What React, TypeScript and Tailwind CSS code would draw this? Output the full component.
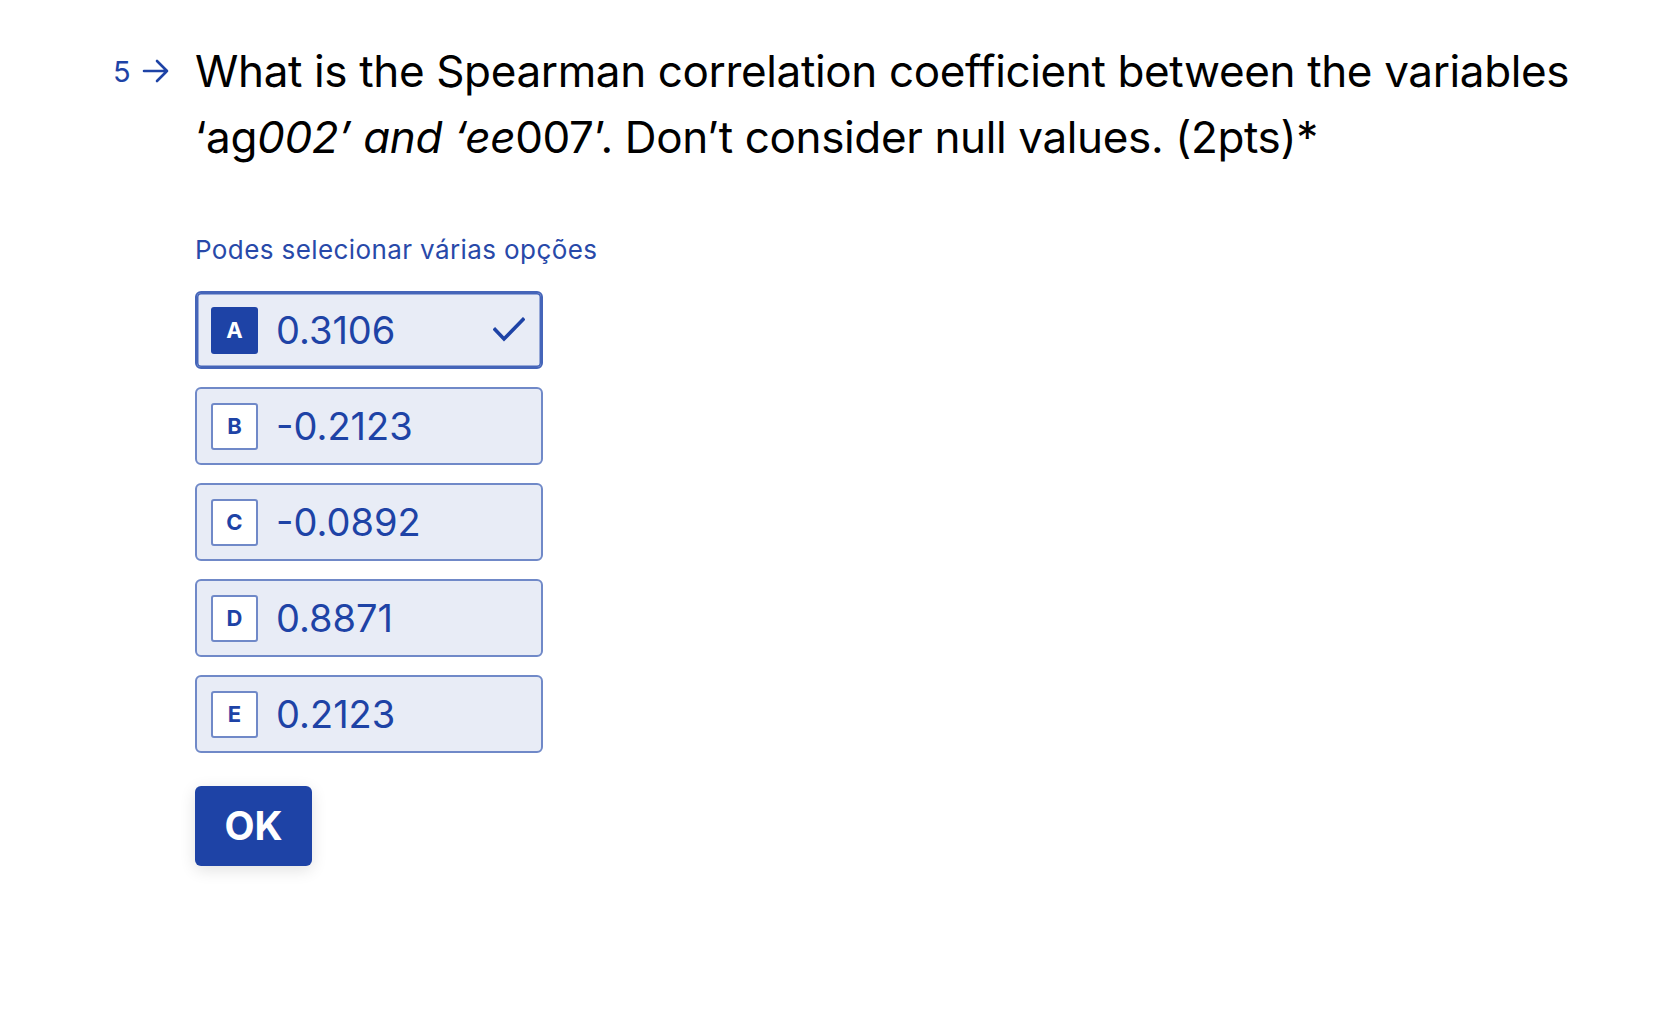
import React, { useState } from "react";

const options = [
  { key: "A", value: "0.3106" },
  { key: "B", value: "-0.2123" },
  { key: "C", value: "-0.0892" },
  { key: "D", value: "0.8871" },
  { key: "E", value: "0.2123" },
];

function Check() {
  return (
    <svg width="32" height="26" viewBox="0 0 32 26" fill="none">
      <path
        d="M2 12.5 L11 22 L30 2.5"
        stroke="#1e43a6"
        strokeWidth="3.6"
        strokeLinecap="square"
        strokeLinejoin="miter"
      />
    </svg>
  );
}

function Arrow() {
  return (
    <svg width="28" height="24" viewBox="0 0 28 24" fill="none">
      <path
        d="M2 12 H25 M15 2 L25 12 L15 22"
        stroke="#1e43a6"
        strokeWidth="2.6"
        strokeLinecap="round"
        strokeLinejoin="round"
      />
    </svg>
  );
}

function Option({
  letter,
  value,
  selected,
  onClick,
}: {
  letter: string;
  value: string;
  selected: boolean;
  onClick: () => void;
}) {
  return (
    <button
      onClick={onClick}
      className={
        selected
          ? "flex h-[78px] w-[348px] cursor-pointer items-center rounded-[6px] border-2 border-[#4565b9] bg-[#e8ecf6] pl-[14px] pr-[16px] text-left shadow-[inset_0_0_0_1.5px_#4565b9]"
          : "flex h-[78px] w-[348px] cursor-pointer items-center rounded-[6px] border-2 border-[#7089c8] bg-[#e8ecf6] pl-[14px] pr-[16px] text-left"
      }
    >
      <span
        className={
          selected
            ? "flex h-[47px] w-[47px] shrink-0 items-center justify-center rounded-[3px] bg-[#1e43a6] text-[22px] font-bold text-white"
            : "flex h-[47px] w-[47px] shrink-0 items-center justify-center rounded-[3px] border-2 border-[#7089c8] bg-white text-[22px] font-bold text-[#1e43a6]"
        }
      >
        {letter}
      </span>
      <span className="ml-[18px] flex-1 text-[38px] leading-none text-[#1e43a6]">
        {value}
      </span>
      {selected && <Check />}
    </button>
  );
}

export default function App() {
  const [selected, setSelected] = useState<string[]>(["A"]);

  const toggle = (k: string) =>
    setSelected((s) => (s.includes(k) ? s.filter((x) => x !== k) : [...s, k]));

  return (
    <div className="min-h-screen bg-white font-['Inter','Liberation_Sans',sans-serif] text-black">
      <div className="flex pl-[113px] pt-[38px]">
        <div className="flex w-[82px] shrink-0 items-start gap-[11px] pt-[21px] text-[#1e43a6]">
          <span className="text-[29px] leading-[26px]">5</span>
          <Arrow />
        </div>
        <div className="flex flex-col">
          <h1 className="w-[1420px] text-[44px] leading-[66px] tracking-[-0.36px]">
            What is the Spearman correlation coefficient between the variables
            ‘ag<em>002’ and ‘ee</em>007’. Don’t consider null values. (2pts)*
          </h1>
          <p className="mt-[62px] text-[26px] leading-[36px] tracking-[0.4px] text-[#2849a9]">
            Podes selecionar várias opções
          </p>
          <div className="mt-[23px] flex flex-col gap-[18px]">
            {options.map((o) => (
              <Option
                key={o.key}
                letter={o.key}
                value={o.value}
                selected={selected.includes(o.key)}
                onClick={() => toggle(o.key)}
              />
            ))}
          </div>
          <div className="mt-[33px]">
            <button className="h-[80px] w-[117px] cursor-pointer rounded-[6px] bg-[#1e43a6] text-[39px] font-bold text-white shadow-[0_4px_16px_rgba(0,0,0,0.12)]">
              OK
            </button>
          </div>
        </div>
      </div>
    </div>
  );
}
